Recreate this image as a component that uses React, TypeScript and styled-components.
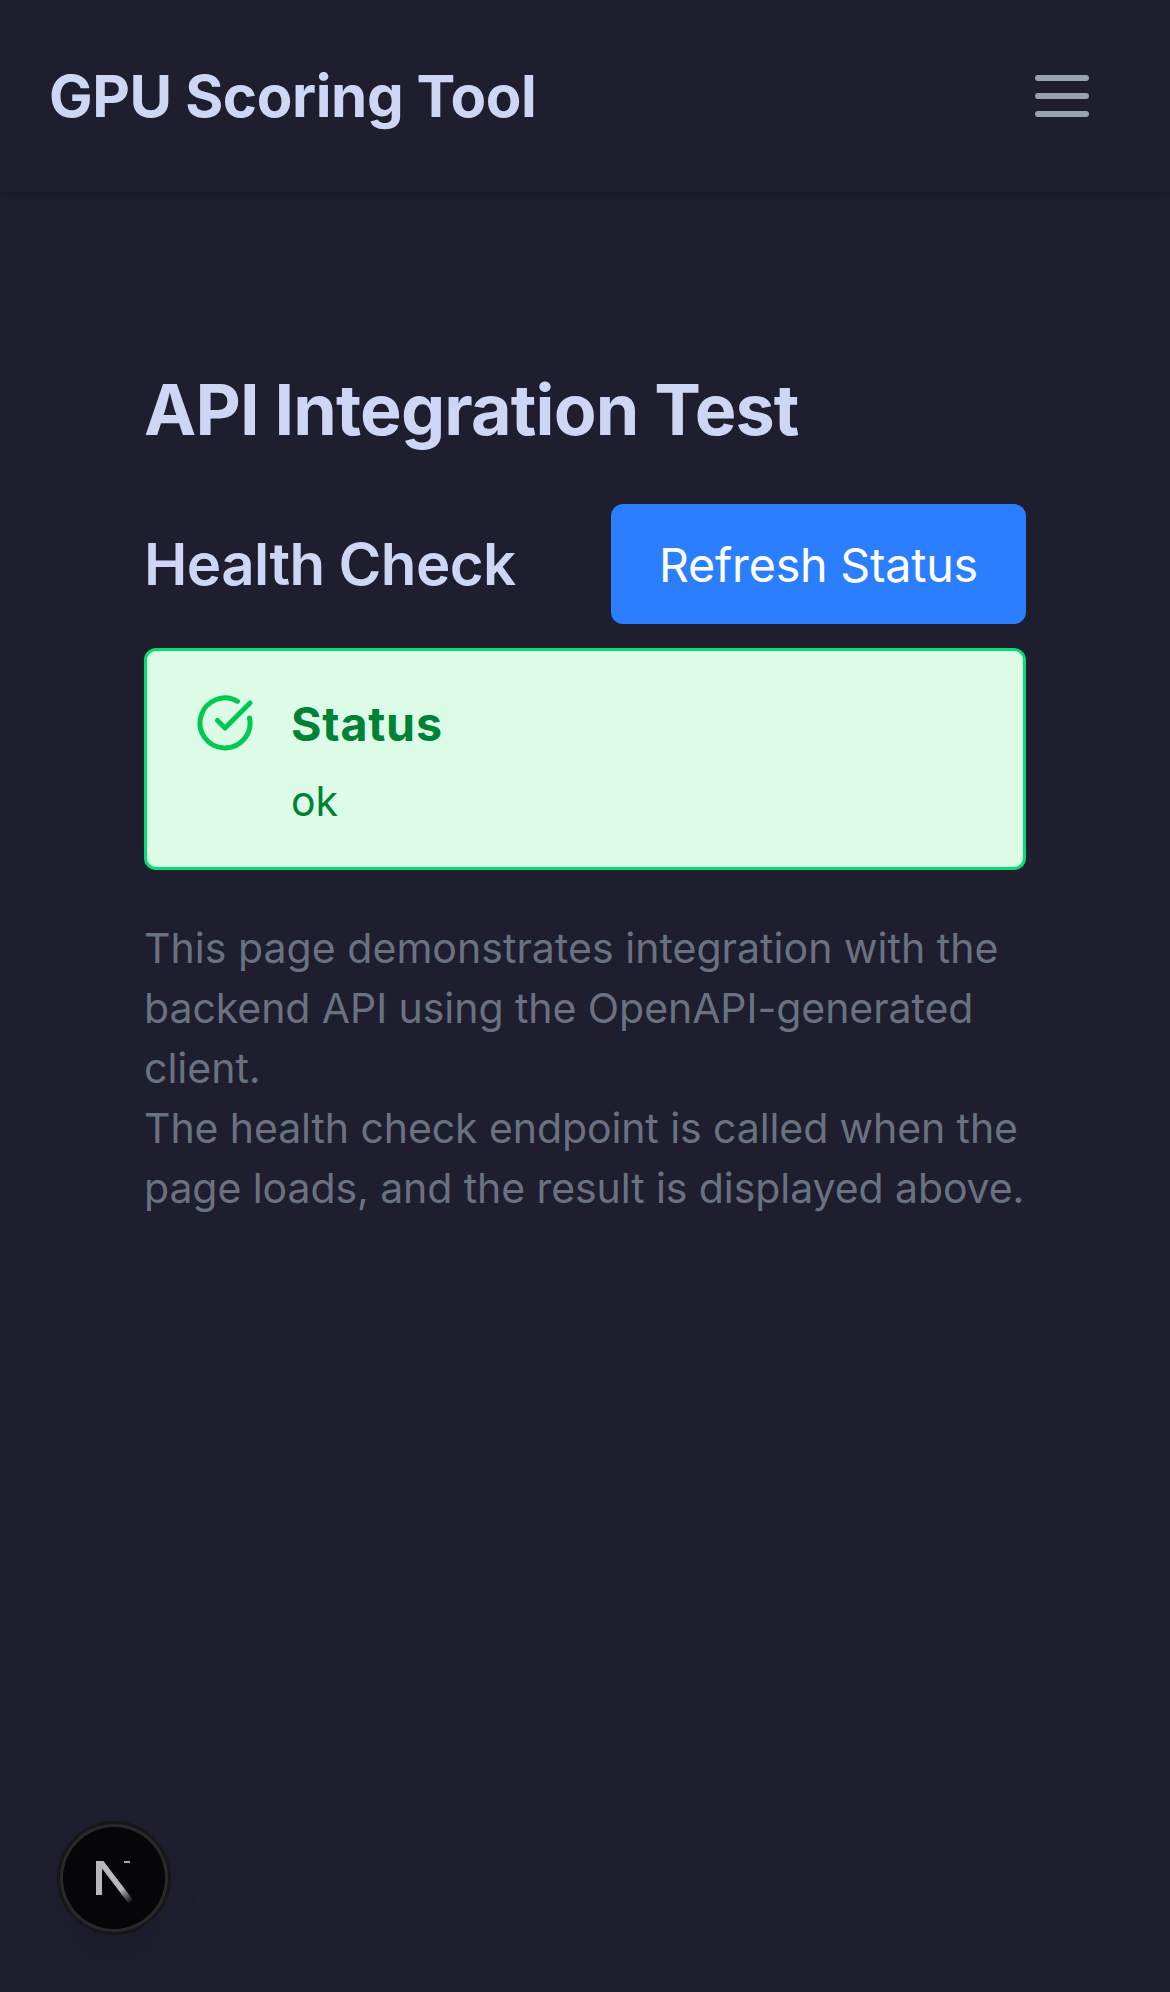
import React from "react";
import styled, { createGlobalStyle } from "styled-components";

const GlobalStyle = createGlobalStyle`
  *, *::before, *::after { box-sizing: border-box; }
  html, body { margin: 0; background: #1e1e2e; }
  body { font-family: Inter, "Liberation Sans", sans-serif; color: #cdd6f4; }
  h1, h2, h3, p { margin: 0; }
  button { font-family: inherit; border: 0; margin: 0; cursor: pointer; }
`;

const Page = styled.div`
  min-height: 1992px;
  display: flex;
  flex-direction: column;
  background: #1e1e2e;
`;

const Header = styled.header`
  height: 192px;
  padding: 0 48px 0 49px;
  display: flex;
  align-items: center;
  justify-content: space-between;
  box-shadow: 0 3px 9px rgba(0, 0, 0, 0.1), 0 3px 6px -3px rgba(0, 0, 0, 0.1);
`;

const Brand = styled.span`
  font-size: 58.2px;
  line-height: 84px;
  font-weight: 700;
  letter-spacing: -0.4px;
  white-space: nowrap;
`;

const MenuButton = styled.button`
  display: flex;
  padding: 24px;
  background: transparent;
  color: #99a1af;
`;

const Main = styled.main`
  display: flex;
  flex-direction: column;
  padding: 170px 144px 0;
`;

const Title = styled.h1`
  font-size: 70px;
  line-height: 96px;
  font-weight: 700;
  letter-spacing: -0.85px;
  white-space: nowrap;
  margin-bottom: 46px;
`;

const SectionHead = styled.div`
  display: flex;
  align-items: center;
  justify-content: space-between;
  margin-bottom: 24px;
`;

const SectionTitle = styled.h2`
  font-size: 58.2px;
  line-height: 84px;
  font-weight: 600;
  letter-spacing: -0.6px;
  white-space: nowrap;
`;

const RefreshButton = styled.button`
  width: 415px;
  height: 120px;
  border-radius: 12px;
  background: #2b7fff;
  color: #fff;
  font-size: 46.6px;
  line-height: 72px;
  letter-spacing: -0.2px;
  white-space: nowrap;
  padding: 2px 0 0;
`;

const Alert = styled.section`
  display: grid;
  grid-template-columns: 60px 1fr;
  column-gap: 36px;
  height: 222px;
  padding: 36px 48px;
  border: 3px solid #05df72;
  border-radius: 12px;
  background: #dcfce7;
  color: #008236;
  margin-bottom: 48px;
`;

const AlertIcon = styled.svg`
  width: 60px;
  height: 60px;
  margin-top: 6px;
  color: #00c951;
`;

const AlertTitle = styled.h3`
  margin-top: 1px;
  font-size: 46.6px;
  line-height: 72px;
  font-weight: 700;
  letter-spacing: 0.8px;
`;

const AlertText = styled.p`
  margin-top: 10px;
  font-size: 41px;
  line-height: 63px;
`;

const Note = styled.div`
  font-size: 41px;
  line-height: 60px;
  color: #6a7282;
  white-space: nowrap;
`;

const NoteLine = styled.span<{ $tracking: number }>`
  display: block;
  letter-spacing: ${(p) => p.$tracking}px;
`;

const DevBadge = styled.button`
  position: fixed;
  left: 60px;
  bottom: 60px;
  width: 108px;
  height: 108px;
  padding: 0;
  border-radius: 50%;
  background: rgba(0, 0, 0, 0.8);
  box-shadow: 0 0 0 3px #171717, inset 0 0 0 3px rgba(255, 255, 255, 0.14),
    0 36px 60px -18px rgba(0, 0, 0, 0.14);
`;

const BadgeMark = styled.svg`
  display: block;
  width: 108px;
  height: 108px;
`;

const noteLines = [
  { text: "This page demonstrates integration with the", tracking: 0.04 },
  { text: "backend API using the OpenAPI-generated", tracking: -0.06 },
  { text: "client.", tracking: 0 },
  { text: "The health check endpoint is called when the", tracking: -0.09 },
  { text: "page loads, and the result is displayed above.", tracking: -0.08 },
];

export default function App() {
  return (
    <Page>
      <GlobalStyle />
      <Header>
        <Brand>GPU Scoring Tool</Brand>
        <MenuButton aria-label="Open menu">
          <svg width="72" height="72" viewBox="0 0 24 24" fill="none" stroke="currentColor" strokeWidth="2" strokeLinecap="round">
            <path d="M4 6h16M4 12h16M4 18h16" />
          </svg>
        </MenuButton>
      </Header>
      <Main>
        <Title>API Integration Test</Title>
        <SectionHead>
          <SectionTitle>Health Check</SectionTitle>
          <RefreshButton>Refresh Status</RefreshButton>
        </SectionHead>
        <Alert role="alert">
          <AlertIcon viewBox="0 0 24 24" fill="none" stroke="currentColor" strokeWidth="2" strokeLinecap="round" strokeLinejoin="round">
            <path d="M21.801 10A10 10 0 1 1 17 3.335" />
            <path d="m9 11 3 3L22 4" />
          </AlertIcon>
          <div>
            <AlertTitle>Status</AlertTitle>
            <AlertText>ok</AlertText>
          </div>
        </Alert>
        <Note>
          {noteLines.map((line) => (
            <NoteLine key={line.text} $tracking={line.tracking}>
              {line.text}
            </NoteLine>
          ))}
        </Note>
      </Main>
      <DevBadge aria-label="Dev tools">
        <BadgeMark viewBox="0 0 108 108" fill="none">
          <defs>
            <linearGradient id="fade" gradientUnits="userSpaceOnUse" x1="61" y1="66" x2="71" y2="79">
              <stop stopColor="#b8b8ba" />
              <stop offset="1" stopColor="#b8b8ba" stopOpacity="0" />
            </linearGradient>
          </defs>
          <path d="M36 37h7.5L73.5 76.5 69 80 42 44.5V71h-6z" fill="url(#fade)" />
          <path d="M64 37h6v2h-6z" fill="#a5a5a8" />
        </BadgeMark>
      </DevBadge>
    </Page>
  );
}
